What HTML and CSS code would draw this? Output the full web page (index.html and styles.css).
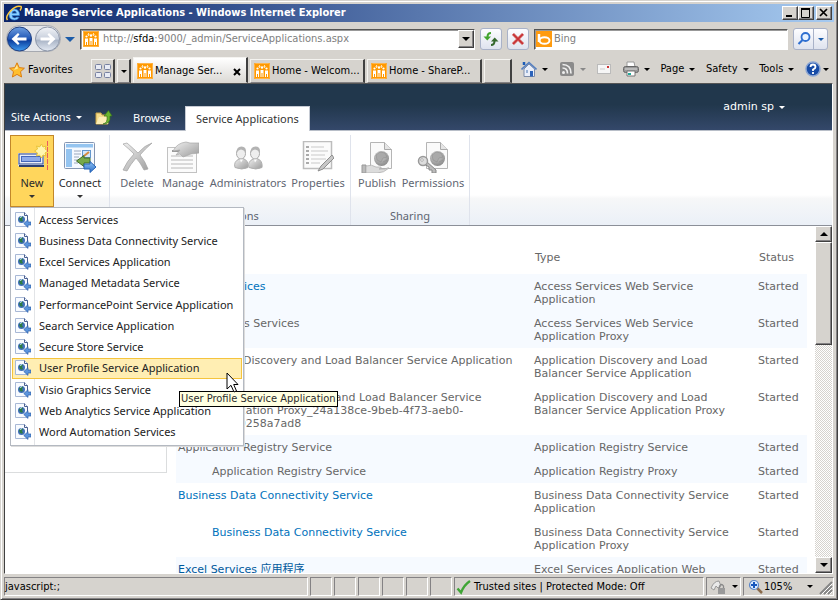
FILE: index.html
```html
<!DOCTYPE html>
<html lang="en">
<head>
<meta charset="utf-8">
<title>Manage Service Applications</title>
<link rel="stylesheet" href="styles.css">
</head>
<body>
<svg class="defs" aria-hidden="true">
  <defs>
    <linearGradient id="blueball" x1="0" y1="0" x2="0" y2="1"><stop offset="0" stop-color="#6f9fe0"/><stop offset=".5" stop-color="#1f55b5"/><stop offset=".55" stop-color="#0b3c9c"/><stop offset="1" stop-color="#3f9cf0"/></linearGradient>
    <linearGradient id="greyball" x1="0" y1="0" x2="0" y2="1"><stop offset="0" stop-color="#f2f4f8"/><stop offset=".5" stop-color="#c6cedb"/><stop offset=".55" stop-color="#a9b4c6"/><stop offset="1" stop-color="#e4eaf3"/></linearGradient>
    <linearGradient id="silver" x1="0" y1="0" x2="1" y2="1"><stop offset="0" stop-color="#f0f0f0"/><stop offset="1" stop-color="#9b9b9b"/></linearGradient>
    <radialGradient id="globe" cx=".4" cy=".3" r=".7"><stop offset="0" stop-color="#d8d8d8"/><stop offset="1" stop-color="#8c8c8c"/></radialGradient>
    <linearGradient id="sky" x1="0" y1="0" x2="0" y2="1"><stop offset="0" stop-color="#8fc3f5"/><stop offset="1" stop-color="#2d6fc8"/></linearGradient>
  </defs>
  <symbol id="sp" viewBox="0 0 16 16"><rect width="16" height="16" rx="1" fill="#f90"/><rect x=".5" y=".5" width="15" height="15" rx="1" fill="none" stroke="#ffb54a"/><g fill="#fff"><circle cx="3.500" cy="5.500" r="1.100"/><circle cx="8" cy="4.500" r="1.200"/><circle cx="12.500" cy="5.500" r="1.100"/><path d="M2 7.500h3v6.500H4v-3H3v3H2zM6.500 7h3v7h-1v-4h-1v4h-1zM11 7.500h3v6.500h-1v-3h-1v3h-1z"/></g><path d="M5.500 2v3M4.500 3.500h2M10.500 2v3M9.500 3.500h2" stroke="#ffe0b0"/></symbol>
  <symbol id="svc" viewBox="0 0 16 16"><path d="M.500.500h9l3 3v11h-12z" fill="#f8fbff" stroke="#a8b8d6"/><path d="M9.500.500v3h3v7" fill="none" stroke="#4a5f90"/><circle cx="6.500" cy="7.500" r="3.500" fill="#3f6fb8"/><path d="M4 6.500q2-3 4-1.500l-1 2 1 2q-3 2-4-2.500" fill="#2d7c42"/><path d="M5 5.500l2-1" stroke="#cfe6ff"/><path d="M16 10h-3V7.700L8.800 11.500l4.200 3.900V13h3z" fill="#5b94dc" stroke="#2c5faa" stroke-width=".7"/></symbol>
  <symbol id="doc" viewBox="0 0 32 32"><path d="M9.500 1.500h14l7 7v19h-21z" fill="#fafafa" stroke="#b5b5b5"/><path d="M23.500 1.500v7h7" fill="#e5e5e5" stroke="#aaa"/><circle cx="20.500" cy="17.500" r="7.500" fill="url(#globe)"/><path d="M15 14l4-3 5 1 2 4-4 1-2 4-4-2zM22 21l4-2" fill="#aaa" stroke="#888" stroke-width=".5"/></symbol>
  <symbol id="person" viewBox="0 0 16 24"><path d="M2 21q-2-6 5-9h3q6 2 5 9-6 3-13 0z" fill="url(#silver)" stroke="#b0b0b0"/><ellipse cx="8" cy="7" rx="4.500" ry="5.500" fill="#eee" stroke="#aaa"/><path d="M3.500 6q0-6 5-6t4.500 6q-3-3-5-3t-4.500 3z" fill="#b3b3b3"/><path d="M7 13l1 3 2-3" fill="#fff"/></symbol>
</svg>

<div class="window">
  <header class="titlebar">
    <svg class="ie" viewBox="0 0 16 16"><path d="M13.500 10.500H6q.3 2.500 2.700 2.500 1.500 0 2-1l2.400.4Q11.500 15 8.500 15 3 15 3 9.300 3 4 8.300 4 13.600 4 13.500 10.500zM6 8.200h4.500Q10.300 6 8.300 6 6.300 6 6 8.200z" fill="#8cd0ff" stroke="#2b86dc" stroke-width=".6"/><path d="M1.500 15Q-1 12 4.500 6T15 1.500q1 1-1 4" fill="none" stroke="#ffc83c" stroke-width="1.500"/></svg>
    <h1>Manage Service Applications - Windows Internet Explorer</h1>
    <div class="winbtns">
      <button type="button" aria-label="Minimize"><svg viewBox="0 0 12 10"><path d="M2 8h6" stroke="#000" stroke-width="2"/></svg></button>
      <button type="button" aria-label="Maximize"><svg viewBox="0 0 12 10"><path d="M1.500 1v8.500h8V1M1 1h9" fill="none" stroke="#000"/><path d="M1 1h9" stroke="#000" stroke-width="2"/></svg></button>
      <button type="button" aria-label="Close" class="close"><svg viewBox="0 0 12 10"><path d="M2 1l7 7M9 1L2 8" stroke="#000" stroke-width="1.700"/></svg></button>
    </div>
  </header>

  <div class="addressbar">
    <div class="nav">
      <svg viewBox="0 0 56 28"><rect x=".5" y=".5" width="54" height="26" rx="13" fill="#e4e6ea" stroke="#a6a9b0"/><circle cx="13.500" cy="14" r="12" fill="url(#blueball)" stroke="#203f80"/><path d="M5.500 14l6.500-6 1.500 1.500L11 12.500h9.500v3H11l2.500 3L12 20z" fill="#fff"/><circle cx="41.500" cy="14" r="12" fill="url(#greyball)" stroke="#8c96a8"/><path d="M49.500 14L43 8l-1.500 1.500 2.500 3h-9.500v3H44l-2.500 3L43 20z" fill="#fff"/></svg>
      <i class="arrow blue big"></i>
    </div>
    <div class="field address">
      <svg><use href="#sp"/></svg>
      <div class="url" role="textbox" aria-label="Address">http://<b>sfda</b>:9000/_admin/ServiceApplications.aspx</div>
      <button type="button" class="drop" aria-label="Show addresses"><i class="arrow"></i></button>
    </div>
    <button type="button" class="soft" aria-label="Refresh"><svg viewBox="0 0 16 16"><path d="M8 2Q4.500 2 4.500 6" fill="none" stroke="#43a52e" stroke-width="2"/><path d="M.5 5.500h7.500L4.300 9.500z" fill="#43a52e"/><path d="M8 14q3.500 0 3.500-4" fill="none" stroke="#35682c" stroke-width="2"/><path d="M8 10.500h7.500L11.700 6.500z" fill="#35682c"/></svg></button>
    <button type="button" class="soft" aria-label="Stop"><svg viewBox="0 0 16 16"><path d="M3 3l10 10M13 3L3 13" stroke="#d9706c" stroke-width="3"/><path d="M3 3l10 10M13 3L3 13" stroke="#c62f33" stroke-width="1.500"/></svg></button>
    <div class="field search">
      <svg viewBox="0 0 16 16"><rect width="16" height="16" fill="#ff9b0f"/><path d="M3 3v8" stroke="#fff" stroke-width="2.500"/><ellipse cx="8.500" cy="9.500" rx="5" ry="3.300" fill="none" stroke="#fff" stroke-width="2"/></svg>
      <input type="text" placeholder="Bing" aria-label="Search">
    </div>
    <div class="softpair">
      <button type="button" aria-label="Go"><svg viewBox="0 0 16 16"><circle cx="9.500" cy="6" r="4" fill="#e8f3ff" stroke="#2e6fd0" stroke-width="1.800"/><path d="M6.500 9L2.500 13" stroke="#2e6fd0" stroke-width="2.200"/></svg></button>
      <button type="button" aria-label="Search options"><i class="arrow blue small"></i></button>
    </div>
  </div>

  <div class="commandbar">
    <button type="button" class="fav"><svg viewBox="0 0 16 16"><path d="M8 .8l2.200 4.800 5.200.6-3.900 3.500 1.100 5.300L8 12.400 3.400 15l1.100-5.300L.6 6.200l5.200-.6z" fill="#ffbf2f" stroke="#dc7d12"/><path d="M8 3l1 3.500-4 1.500z" fill="#ffe89a"/></svg>Favorites</button>
    <div class="tabs">
      <button type="button" class="tab quick" aria-label="Quick Tabs"><svg viewBox="0 0 16 14"><g fill="#e9ecf5" stroke="#7780a0"><rect x=".5" y=".5" width="6" height="5" rx="1"/><rect x="9.500" y=".5" width="6" height="5" rx="1"/><rect x=".5" y="8.500" width="6" height="5" rx="1"/><rect x="9.500" y="8.500" width="6" height="5" rx="1"/></g></svg></button>
      <button type="button" class="tab list" aria-label="Tab list"><i class="arrow small"></i></button>
      <button type="button" class="tab page active"><svg><use href="#sp"/></svg><span>Manage Ser...</span><svg class="x" viewBox="0 0 8 8"><path d="M1 1l6 6M7 1L1 7" stroke="#000" stroke-width="2"/></svg></button>
      <button type="button" class="tab page"><svg><use href="#sp"/></svg><span>Home - Welcom...</span></button>
      <button type="button" class="tab page"><svg><use href="#sp"/></svg><span>Home - ShareP...</span></button>
      <button type="button" class="tab new" aria-label="New Tab"></button>
    </div>
    <div class="tools">
      <button type="button" aria-label="Home"><svg viewBox="0 0 16 16"><path d="M3 8v7.500h10.500V8L8 3z" fill="#e9eefa" stroke="#7c8ba8"/><path d="M.5 8.500L8 1.500l7.500 7" fill="none" stroke="#557fc0" stroke-width="1.600"/><path d="M3 1v3" stroke="#1c5cb8" stroke-width="2.500"/><path d="M9 10h3v5.500H9z" fill="#2b62ba"/><path d="M5 9h2v3H5z" fill="#99b2d6"/></svg><i class="arrow small"></i></button>
      <button type="button" aria-label="Feeds"><svg viewBox="0 0 16 16"><rect x="1" y="1" width="14" height="14" rx="2" fill="#8b8b8b"/><circle cx="4.500" cy="11.500" r="1.500" fill="#eee"/><path d="M3.500 7q5 0 5 5.500M3.500 3.500q8.500 0 8.500 9" fill="none" stroke="#eee" stroke-width="1.700"/></svg><i class="arrow small dim"></i></button>
      <button type="button" aria-label="Mail"><svg viewBox="0 0 16 16"><rect x="1.500" y="3.500" width="13" height="9" fill="#f6f6f6" stroke="#bbb"/><path d="M11 5h2v2h-2z" fill="#c33"/><path d="M4 8h5" stroke="#ccc"/></svg></button>
      <button type="button" aria-label="Print"><svg viewBox="0 0 16 16"><path d="M4 1h7l1 5H4z" fill="#fff" stroke="#999"/><rect x=".5" y="5.500" width="15" height="6" rx="2" fill="#999" stroke="#666"/><path d="M2 8h12" stroke="#ddd"/><path d="M4 10h8v5H4z" fill="#fff" stroke="#777"/><path d="M5 13h3" stroke="#2a9" stroke-width="2"/></svg><i class="arrow small"></i></button>
      <button type="button">Page<i class="arrow small"></i></button>
      <button type="button">Safety<i class="arrow small"></i></button>
      <button type="button">Tools<i class="arrow small"></i></button>
      <button type="button" class="help" aria-label="Help"><svg viewBox="0 0 16 16"><circle cx="8" cy="8" r="7" fill="#174ba6" stroke="#8aa4d2" stroke-width="1.500"/><path d="M5.500 6q0-2.500 2.500-2.500T10.500 6Q10.500 7.500 8 8.500V10M8 11v2" fill="none" stroke="#fff" stroke-width="1.800"/></svg><i class="arrow small"></i></button>
    </div>
  </div>

  <main class="viewport">
    <div class="topband">
      <button type="button" class="site">Site Actions<i class="arrow small white"></i></button>
      <svg class="up" viewBox="0 0 18 18"><path d="M1 4h5l1 2h6v9H1z" fill="#f5dc8c" stroke="#c9a345"/><path d="M4 8h9v7H1z" fill="#fdeeb5"/><path d="M8 15q5-1 4-8H9l4.500-5.500L17 7h-2q1 8-7 8z" fill="#6db52d" stroke="#35731b" stroke-width=".7"/></svg>
      <a href="#" class="rtab">Browse</a>
      <a href="#" class="rtab on">Service Applications</a>
      <button type="button" class="user">admin sp<i class="arrow small white"></i></button>
    </div>

    <div class="ribbon">
      <section class="group create">
        <div class="cmds">
          <div class="newwrap">
            <button type="button" class="cmd hot"><svg viewBox="0 0 32 32"><rect x="2.500" y="12.500" width="25" height="12" fill="#fff" stroke="#e8e9ee"/><rect x="3" y="13" width="24" height="10" fill="#e9edf8" stroke="#26458f"/><rect x="5.500" y="15.500" width="19" height="5" fill="#8fabe8" stroke="#4668ba"/><path d="M3 25h25" stroke="#2c4175" stroke-width="2"/><path d="M25.500 3l1.500 3 3-1-1 3 3 2-3 2 1 3-3-1-1.500 3-2-3-3 1 1-3-3-2 3-2-1-3 3 1z" fill="#fff6b0" stroke="#e8c43a"/><path d="M31.500 0v29" stroke="#ea5a5e" stroke-dasharray="5 1"/></svg><span>New</span><i class="arrow small"></i></button>
            <ul class="menu">
              <li><a href="#"><svg><use href="#svc"/></svg><span>Access Services</span></a></li>
              <li><a href="#"><svg><use href="#svc"/></svg><span>Business Data Connectivity Service</span></a></li>
              <li><a href="#"><svg><use href="#svc"/></svg><span>Excel Services Application</span></a></li>
              <li><a href="#"><svg><use href="#svc"/></svg><span>Managed Metadata Service</span></a></li>
              <li><a href="#"><svg><use href="#svc"/></svg><span>PerformancePoint Service Application</span></a></li>
              <li><a href="#"><svg><use href="#svc"/></svg><span>Search Service Application</span></a></li>
              <li><a href="#"><svg><use href="#svc"/></svg><span>Secure Store Service</span></a></li>
              <li class="sel"><a href="#"><svg><use href="#svc"/></svg><span>User Profile Service Application</span></a>
                <div class="tip">User Profile Service Application</div>
                <svg class="cursor" viewBox="0 0 13 21"><path d="M1 1v16l4-3.700L8 20l2.500-1-2.800-6.500H12z" fill="#fff" stroke="#000"/></svg></li>
              <li><a href="#"><svg><use href="#svc"/></svg><span>Visio Graphics Service</span></a></li>
              <li><a href="#"><svg><use href="#svc"/></svg><span>Web Analytics Service Application</span></a></li>
              <li><a href="#"><svg><use href="#svc"/></svg><span>Word Automation Services</span></a></li>
            </ul>
          </div>
          <button type="button" class="cmd connect"><svg viewBox="0 0 32 32"><rect x=".5" y="1.500" width="30" height="26" rx="1" fill="#f5f9ff" stroke="#8596b2"/><path d="M2 3h27v3.500H2zM2 8h6v18H2z" fill="#94c4f0"/><path d="M10 10h7M10 13h7M10 16h5M10 19h4M10 22h4" stroke="#9ba8bd"/><rect x="18.500" y="9.500" width="8" height="7" fill="#d4e7fb" stroke="#6396cd"/><path d="M20 15l5-4" stroke="#d78b3f" stroke-width="2"/><path d="M26 17v5h-6v3.500L12.500 20 20 14.500V17z" fill="#77a94a" stroke="#3f6c25"/><path d="M20 23v5h6v3.500l6-5.500-6-5.500V23z" fill="url(#sky)" stroke="#2763b5"/></svg><span>Connect</span><i class="arrow small"></i></button>
        </div>
        <h2>Create</h2>
      </section>
      <section class="group operations">
        <div class="cmds off">
          <button type="button" class="cmd delete"><svg viewBox="0 0 32 32"><path d="M2 3l4-1q7 6 11 10 7-8 14-10-7 6-12 12 5 6 8 14l-4 1q-4-8-8-12-6 7-9 13l-4-1q4-9 11-16Q8 8 2 3z" fill="url(#silver)" stroke="#a2a2a2" stroke-width=".7"/></svg><span>Delete</span></button>
          <button type="button" class="cmd manage"><svg viewBox="0 0 32 32"><rect x=".5" y="6.500" width="29" height="25" fill="#fbfbfb" stroke="#c2c2c2"/><path d="M4 15h22M4 19h22M4 23h22M4 27h22" stroke="#b8b8b8"/><path d="M5 10h8" stroke="#999" stroke-width="2"/><path d="M6 10q4-8 13-9l4 1h9v10l-8 1-8 3-3-3-4 1 4-5z" fill="url(#silver)" stroke="#a8a8a8" stroke-width=".7"/></svg><span>Manage</span></button>
          <button type="button" class="cmd admins"><svg viewBox="0 0 32 32"><use href="#person" x="1" y="5" width="16" height="25"/><use href="#person" x="15" y="5" width="16" height="25"/></svg><span>Administrators</span></button>
          <button type="button" class="cmd props"><svg viewBox="0 0 32 32"><rect x="1.500" y=".5" width="28" height="27" fill="#fbfbfb" stroke="#bdbdbd" stroke-width="1.500"/><path d="M4 6h3M4 10h3M4 14h3M4 18h3M4 22h3" stroke="#aaa" stroke-width="2"/><path d="M9 6h13M9 10h17M9 14h14M9 18h15M9 22h9" stroke="#c9c9c9"/><path d="M16 30l3-5L30 14l2 3-11 11z" fill="#c7c7c7" stroke="#8f8f8f"/></svg><span>Properties</span></button>
        </div>
        <h2>Operations</h2>
      </section>
      <section class="group sharing">
        <div class="cmds off">
          <button type="button" class="cmd publish"><svg viewBox="0 0 32 32"><use href="#doc"/><path d="M1 24h4v8H1z" fill="#bbb" stroke="#999"/><path d="M5 25q6-2 10 1h5q1 2-2 2h6q4-2 4-1-5 5-12 5H5z" fill="#dcdcdc" stroke="#aaa" stroke-width=".7"/></svg><span>Publish</span></button>
          <button type="button" class="cmd perms"><svg viewBox="0 0 32 32"><use href="#doc"/><path d="M9 20l10 9v3h-4v-3h-3v-3L7 23z" fill="#bbb" stroke="#888"/><circle cx="6" cy="20" r="4.500" fill="#ddd" stroke="#999" stroke-width="1.500"/><circle cx="5" cy="19" r="1.300" fill="#fff" stroke="#888" stroke-width=".6"/></svg><span>Permissions</span></button>
        </div>
        <h2>Sharing</h2>
      </section>
    </div>

    <div class="scrollarea">
      <div class="content">
        <nav class="side" aria-label="Navigation"></nav>
        <table>
          <thead><tr><th class="name">Name</th><th class="type">Type</th><th class="status">Status</th></tr></thead>
          <tbody>
            <tr class="alt"><td><a href="#">Access Services</a></td><td>Access Services Web Service Application</td><td>Started</td></tr>
            <tr class="alt"><td class="child">Access Services</td><td>Access Services Web Service Application Proxy</td><td>Started</td></tr>
            <tr><td>Application Discovery and Load Balancer Service Application</td><td>Application Discovery and Load Balancer Service Application</td><td>Started</td></tr>
            <tr><td class="child">Application Discovery and Load Balancer Service Application Proxy_24a138ce-9beb-4f73-aeb0-<br>7c3e0258a7ad8</td><td>Application Discovery and Load Balancer Service Application Proxy</td><td>Started</td></tr>
            <tr class="alt"><td>Application Registry Service</td><td>Application Registry Service</td><td>Started</td></tr>
            <tr class="alt"><td class="child">Application Registry Service</td><td>Application Registry Proxy</td><td>Started</td></tr>
            <tr><td><a href="#">Business Data Connectivity Service</a></td><td>Business Data Connectivity Service Application</td><td>Started</td></tr>
            <tr><td class="child"><a href="#">Business Data Connectivity Service</a></td><td>Business Data Connectivity Service Application Proxy</td><td>Started</td></tr>
            <tr class="alt"><td><a href="#" class="visited">Excel Services 应用程序</a></td><td>Excel Services Application Web Service Application</td><td>Started</td></tr>
          </tbody>
        </table>
      </div>
      <div class="scrollbar">
        <button type="button" aria-label="Scroll up"><i class="arrow up"></i></button>
        <div class="thumb"></div>
        <div class="track"></div>
        <button type="button" aria-label="Scroll down"><i class="arrow"></i></button>
      </div>
    </div>
  </main>

  <footer class="statusbar">
    <div class="cell msg">javascript:;</div>
    <div class="cell blank"></div><div class="cell blank"></div><div class="cell blank"></div><div class="cell blank"></div><div class="cell blank"></div><div class="cell blank"></div>
    <div class="cell zone"><svg viewBox="0 0 16 16"><path d="M1.500 9.500l3.500 4Q8 6 14 2" fill="none" stroke="#3fa535" stroke-width="2.400"/></svg>Trusted sites | Protected Mode: Off</div>
    <div class="cell lock"><svg viewBox="0 0 16 16"><path d="M1 9q3-7 8-7l2 5-3 2-2-2-2 4z" fill="#e9e9e9" stroke="#999"/><rect x="8" y="9" width="7" height="6" fill="#999"/><path d="M9.500 9V7q2-3 4 0v2" fill="none" stroke="#888" stroke-width="1.300"/></svg><i class="arrow small"></i></div>
    <div class="cell zoom"><svg viewBox="0 0 16 16"><path d="M9 9l5 5" stroke="#8a6b4b" stroke-width="2.500"/><circle cx="6" cy="6" r="4.500" fill="#dcecff" stroke="#5b86c7" stroke-width="1.200"/><path d="M6 3v6M3 6h6" stroke="#1757bd" stroke-width="2"/></svg>105%<i class="arrow small"></i><svg class="grip" viewBox="0 0 14 14"><path d="M1 13L13 1M5 13l8-8M9 13l4-4" stroke="#858585" stroke-width="2"/><path d="M2.500 13.500l11-11M6.500 13.500l7-7M10.500 13.500l3-3" stroke="#fff"/></svg></div>
  </footer>
</div>
</body>
</html>
```
FILE: styles.css
```css
* { box-sizing: border-box; }

body {
  margin: 0;
  font: 11px/14px "DejaVu Sans Condensed", Tahoma, sans-serif;
  color: #000;
  background: #d6d3ce;
}

button {
  font: inherit;
  color: inherit;
  background: none;
  border: 0;
  padding: 0;
  margin: 0;
}

a { color: inherit; text-decoration: none; }
svg { width: 16px; height: 16px; flex: none; display: block; }
.defs { position: absolute; width: 0; height: 0; }

.arrow {
  flex: none;
  width: 0;
  height: 0;
  border: 4px solid transparent;
  border-top-color: #000;
  border-bottom: 0;
}
.arrow.small { border-width: 3px; border-bottom: 0; }
.arrow.big { border-width: 5px; border-bottom: 0; }
.arrow.blue { border-top-color: #1c5ca8; }
.arrow.white { border-top-color: #fff; }
.arrow.dim { border-top-color: #888; }
.arrow.up { border: 4px solid transparent; border-top: 0; border-bottom-color: #000; }

.window {
  height: 100vh;
  display: flex;
  flex-direction: column;
  padding: 3px;
  border: 1px solid;
  border-color: #d6d3ce #404040 #404040 #d6d3ce;
  box-shadow: inset 1px 1px #fff, inset -1px -1px #848284;
}

/* Title bar */
.titlebar {
  height: 18px;
  flex: none;
  display: flex;
  align-items: center;
  gap: 2px;
  padding: 0 2px;
  background: linear-gradient(to right, #0a246a, #a6caf0);
  color: #fff;
}
.titlebar h1 { flex: 1; margin: 0; font-size: 11px; white-space: nowrap; }
.winbtns { display: flex; }
.winbtns button,
.drop,
.scrollbar button,
.thumb {
  background: #d6d3ce;
  border: 1px solid;
  border-color: #fff #404040 #404040 #fff;
  box-shadow: inset -1px -1px #848284;
}
.winbtns button { width: 16px; height: 14px; padding: 1px; }
.winbtns svg { width: 12px; height: 10px; }
.winbtns .close { margin-left: 2px; }

/* Address row */
.addressbar {
  height: 34px;
  flex: none;
  display: flex;
  align-items: center;
  gap: 5px;
  padding: 0 6px 0 2px;
}
.nav { display: flex; align-items: center; gap: 3px; width: 69px; }
.nav svg { width: 56px; height: 28px; }
.field {
  height: 21px;
  display: flex;
  align-items: center;
  gap: 4px;
  padding-left: 2px;
  background: #fff;
  border: 1px solid;
  border-color: #555 #fff #fff #555;
  box-shadow: inset 1px 1px #999;
  color: #808080;
}
.address { flex: 1; min-width: 0; }
.url { flex: 1; white-space: nowrap; overflow: hidden; }
.url b { font-weight: normal; color: #000; }
.drop { width: 16px; height: 18px; display: grid; place-items: center; }
.search { width: 254px; padding-left: 1px; gap: 2px; }
.search input { flex: 1; min-width: 0; border: 0; padding: 0; outline: 0; background: none; font: inherit; }
.search input::placeholder { color: #808080; opacity: 1; }
.soft,
.softpair {
  height: 22px;
  border: 1px solid #a9b2c8;
  border-radius: 3px;
  background: linear-gradient(#fdfdff, #dfe3ee);
}
.soft { width: 22px; padding: 2px; }
.softpair { display: flex; width: 35px; }
.softpair button { display: grid; place-items: center; }
.softpair button:first-child { width: 20px; border-right: 1px solid #a9b2c8; }
.softpair button:last-child { flex: 1; }

/* Favorites, tabs and tool commands */
.commandbar { height: 27px; flex: none; display: flex; }
.fav { width: 84px; display: flex; align-items: center; gap: 3px; padding-left: 5px; }
.tabs { display: flex; align-items: stretch; gap: 2px; padding-left: 3px; }
.tab {
  display: flex;
  align-items: center;
  justify-content: center;
  background: #d6d3ce;
  border: 1px solid;
  border-color: #f4f3f0 #404040 #848284 #f4f3f0;
  border-right-width: 2px;
  margin-top: 3px;
}
.tab.quick { width: 24px; }
.tab.quick svg { height: 14px; }
.tab.list { width: 14px; }
.tab.page { width: 115px; gap: 2px; padding-left: 3px; justify-content: flex-start; white-space: nowrap; }
.tab.active { background: linear-gradient(#fff, #dcdad6); margin-top: 1px; padding-top: 2px; border-bottom-color: #dcdad6; }
.tab .x { width: 8px; height: 8px; margin: 2px 5px 0 auto; }
.tab.new { width: 28px; }
.tools { flex: 1; display: flex; justify-content: space-between; padding: 0 5px 1px 9px; }
.tools button { display: flex; align-items: center; gap: 5px; }
.tools .help { gap: 2px; }

/* Page viewport */
.viewport {
  flex: 1;
  min-height: 0;
  display: flex;
  flex-direction: column;
  border: 1px solid;
  border-color: #555 #fff #fff #404040;
  margin-right: 1px;
  background: #fff;
  font-family: "Noto Sans", "Segoe UI", sans-serif;
}
.topband {
  height: 47px;
  flex: none;
  display: flex;
  align-items: flex-end;
  background: linear-gradient(#21374c 45%, #34486a);
  border-bottom: 1px solid #b8bec8;
  color: #fff;
}
.site { display: flex; align-items: center; gap: 5px; width: 90px; padding: 0 0 6px 6px; }
.topband .up { width: 18px; height: 18px; margin-bottom: 3px; }
.rtab { height: 24px; padding: 5px 10px; margin-left: 10px; white-space: nowrap; }
.rtab.on { margin: 0 0 -1px 4px; height: 25px; background: #fff; color: #333; border: 1px solid #c5cad3; border-bottom: 0; }
.user {
  margin-left: auto;
  align-self: flex-start;
  display: flex;
  align-items: center;
  gap: 5px;
  padding: 16px 47px 0 0;
  font-family: "DejaVu Sans", Verdana, sans-serif;
}

.ribbon {
  height: 95px;
  flex: none;
  display: flex;
  padding: 4px 0 0 5px;
  border-bottom: 1px solid #8b8f98;
  background: linear-gradient(#fff 68%, #f6f7f8 72%, #ebf0f7);
}
.group { border-right: 1px solid #dfe3ec; display: flex; flex-direction: column; }
.group.create { width: 100px; }
.group.operations { width: 241px; }
.group.sharing { width: 119px; }
.group h2 { margin: 2px 0 0; font-size: 11px; font-weight: normal; text-align: center; color: #5d6470; }
.cmds { display: flex; justify-content: space-between; height: 72px; color: #2c2c2c; }
.create .cmds { padding-right: 3px; }
.operations .cmds { padding: 0 2px 0 6px; }
.sharing .cmds { padding: 0 3px 0 4px; }
.cmds.off { color: #5f6672; }
.cmd { display: flex; flex-direction: column; align-items: center; padding-top: 5px; border: 1px solid transparent; }
.cmd > svg { width: 32px; height: 32px; }
.cmd > span { line-height: 16px; margin: 2px 0 4px; }
.cmd .arrow { border-top-color: #333; }
.cmd.hot { width: 44px; height: 72px; background: #ffd65c; border-color: #c2872a; }
.cmd.connect { width: 52px; }
.cmd.delete { width: 42px; }
.cmd.manage { width: 50px; }
.cmd.admins { width: 80px; }
.cmd.props { width: 60px; }
.cmd.publish { width: 44px; }
.cmd.perms { width: 66px; }

/* Drop-down of the New command */
.newwrap { position: relative; }
.menu {
  position: absolute;
  z-index: 2;
  top: 72px;
  left: 0;
  width: 234px;
  height: 239px;
  display: flex;
  flex-direction: column;
  margin: 0;
  padding: 1px 1px 2px;
  list-style: none;
  background: linear-gradient(to right, #fff 23px, #e2e4e7 23px, #e2e4e7 24px, #fff 24px);
  border: 1px solid #b4b9c1;
  box-shadow: 1px 1px #dcdcdc;
}
.menu li { position: relative; flex: 1; display: flex; border: 1px solid transparent; }
.menu a { flex: 1; display: flex; align-items: center; gap: 8px; padding-left: 2px; color: #222; }
.menu .sel { background: #ffeeb3; border-color: #f5c43d; }
.tip {
  position: absolute;
  z-index: 3;
  left: 166px;
  top: 32px;
  padding: 0 1px;
  white-space: nowrap;
  font: 11px/14px "DejaVu Sans Condensed", Tahoma, sans-serif;
  background: #ffffe1;
  border: 1px solid #000;
}
.cursor { position: absolute; z-index: 4; left: 213px; top: 13px; width: 13px; height: 21px; }

/* Scrolled content */
.scrollarea { flex: 1; min-height: 0; display: flex; overflow: hidden; }
.content { flex: 1; min-width: 0; display: flex; align-items: flex-start; gap: 9px; padding-right: 8px; overflow: hidden; }
.side { width: 162px; height: 247px; flex: none; border: 1px solid #dbddde; border-width: 0 1px 1px 0; }
table {
  flex: 1;
  table-layout: fixed;
  border-collapse: collapse;
  font: 11px/13px "DejaVu Sans", Verdana, "Noto Sans CJK SC", sans-serif;
  color: #676767;
}
th { height: 48px; padding: 14px 3px 0; text-align: left; font-weight: normal; }
.name { width: 356px; }
.status { width: 51px; }
td { padding: 6px 2px 5px; vertical-align: top; }
td:nth-child(2) { padding-right: 16px; }
td a { color: #0072bc; }
td a.visited { color: #00599c; }
.child { padding-left: 36px; }
.alt { background: #f6faff; }

.scrollbar { width: 17px; flex: none; display: flex; flex-direction: column; }
.scrollbar button { height: 16px; flex: none; display: grid; place-items: center; }
.thumb { height: 103px; flex: none; }
.track { flex: 1; background: repeating-conic-gradient(#fff 0 25%, #d6d3ce 0 50%) 0 0 / 2px 2px; }

/* Status bar */
.statusbar { height: 22px; flex: none; display: flex; gap: 2px; padding-top: 3px; }
.cell {
  display: flex;
  align-items: center;
  white-space: nowrap;
  border: 1px solid;
  border-color: #848284 #fff #fff #848284;
}
.msg { flex: 1; }
.blank { width: 22px; }
.zone { width: 250px; gap: 2px; padding-left: 1px; }
.lock { width: 35px; gap: 6px; padding-left: 3px; }
.zoom { width: 91px; gap: 0; padding-left: 4px; }
.zoom .arrow { margin-left: 15px; }
.grip { width: 14px; height: 14px; margin: 3px 0 0 auto; }
```
